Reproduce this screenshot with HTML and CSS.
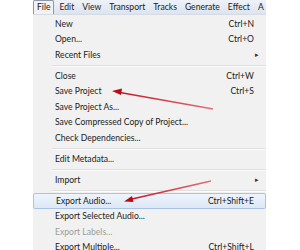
FILE: index.html
```html
<!DOCTYPE html>
<html lang="en">
<head>
  <meta charset="UTF-8" />
  <title>File menu</title>
  <link rel="stylesheet" href="styles.css">
</head>
<body>

  <div class="app">
    <nav class="menubar">
      <span class="top active">File</span>
      <span class="top">Edit</span>
      <span class="top">View</span>
      <span class="top">Transport</span>
      <span class="top">Tracks</span>
      <span class="top">Generate</span>
      <span class="top">Effect</span>
      <span class="top">A</span>
    </nav>

    <ul class="menu">
      <li class="item"><span>New</span><span class="key">Ctrl+N</span></li>
      <li class="item"><span>Open...</span><span class="key">Ctrl+O</span></li>
      <li class="item"><span>Recent Files</span><span class="sub">&#9656;</span></li>
      <li class="sep"></li>
      <li class="item"><span>Close</span><span class="key">Ctrl+W</span></li>
      <li class="item"><span>Save Project</span><span class="key">Ctrl+S</span></li>
      <li class="item"><span>Save Project As...</span></li>
      <li class="item"><span>Save Compressed Copy of Project...</span></li>
      <li class="item"><span>Check Dependencies...</span></li>
      <li class="sep"></li>
      <li class="item"><span>Edit Metadata...</span></li>
      <li class="sep"></li>
      <li class="item"><span>Import</span><span class="sub">&#9656;</span></li>
      <li class="sep"></li>
      <li class="item hover"><span>Export Audio...</span><span class="key">Ctrl+Shift+E</span></li>
      <li class="item"><span>Export Selected Audio...</span></li>
      <li class="item disabled"><span>Export Labels...</span></li>
      <li class="item"><span>Export Multiple...</span><span class="key">Ctrl+Shift+L</span></li>
    </ul>
  </div>

  <!-- red annotation arrows drawn over the menu -->
  <svg class="arrows" width="300" height="250" viewBox="0 0 300 250">
    <defs>
      <linearGradient id="fade1" x1="113" y1="91" x2="213" y2="109" gradientUnits="userSpaceOnUse">
        <stop offset="0" stop-color="#c8101a"/>
        <stop offset="1" stop-color="#e0707a"/>
      </linearGradient>
      <linearGradient id="fade2" x1="125" y1="201" x2="211" y2="181" gradientUnits="userSpaceOnUse">
        <stop offset="0" stop-color="#c8101a"/>
        <stop offset="1" stop-color="#e0707a"/>
      </linearGradient>
    </defs>
    <path d="M120 92.5 L213 109" stroke="url(#fade1)" stroke-width="1.6" fill="none"/>
    <path d="M112 91 L122 88.5 L121 95 Z" fill="#b80c14"/>
    <path d="M132 199 L211 181" stroke="url(#fade2)" stroke-width="1.6" fill="none"/>
    <path d="M124 201.5 L132 196 L133.5 202 Z" fill="#b80c14"/>
  </svg>

</body>
</html>
```

FILE: styles.css
```css
body {
  margin: 0;
  background: #fff;
  font-family: Lato, 'Open Sans', sans-serif;
  font-size: 8.6px;
  color: #1b1b1b;
}

.app {
  margin-left: 33px;
  width: 233px;
  height: 250px;
  overflow: hidden;
}

.menubar {
  display: flex;
  align-items: center;
  height: 14px;
  background: linear-gradient(#eef2f8, #dde4ee);
  border-bottom: 1px solid #d5dbe4;
  white-space: nowrap;
}

.top {
  padding: 0 4px;
  line-height: 13px;
}

.top.active {
  background: #f2f2f2;
  border: 1px solid #8d97a5;
  border-bottom: none;
  border-radius: 2px 2px 0 0;
  padding: 0 3px;
  margin-right: 1px;
}

.menu {
  list-style: none;
  margin: 0;
  padding: 1px 0 0;
  background: #f1f1f1;
  height: 240px;
}

.item {
  display: flex;
  align-items: center;
  height: 15.5px;
  padding: 0 12px 0 22px;
}

.item span:first-child {
  flex: 1;
}

.key {
  text-align: right;
}

.sub {
  font-size: 7px;
  color: #333;
  margin-right: -5px;
}

.sep {
  height: 5.5px;
  margin-left: 19px;
}

.sep::after {
  content: "";
  display: block;
  position: relative;
  top: 2px;
  border-top: 1px solid #e0e0e0;
  border-bottom: 1px solid #fbfbfb;
}

.item.hover {
  background: linear-gradient(#eef4fb, #dde8f6);
  border: 1px solid #a9c3e6;
  border-radius: 2px;
  height: 13.5px;
  padding-right: 11px;
}

.item.disabled {
  color: #9c9c9c;
}

.arrows {
  position: absolute;
  left: 0;
  top: 0;
}
```
